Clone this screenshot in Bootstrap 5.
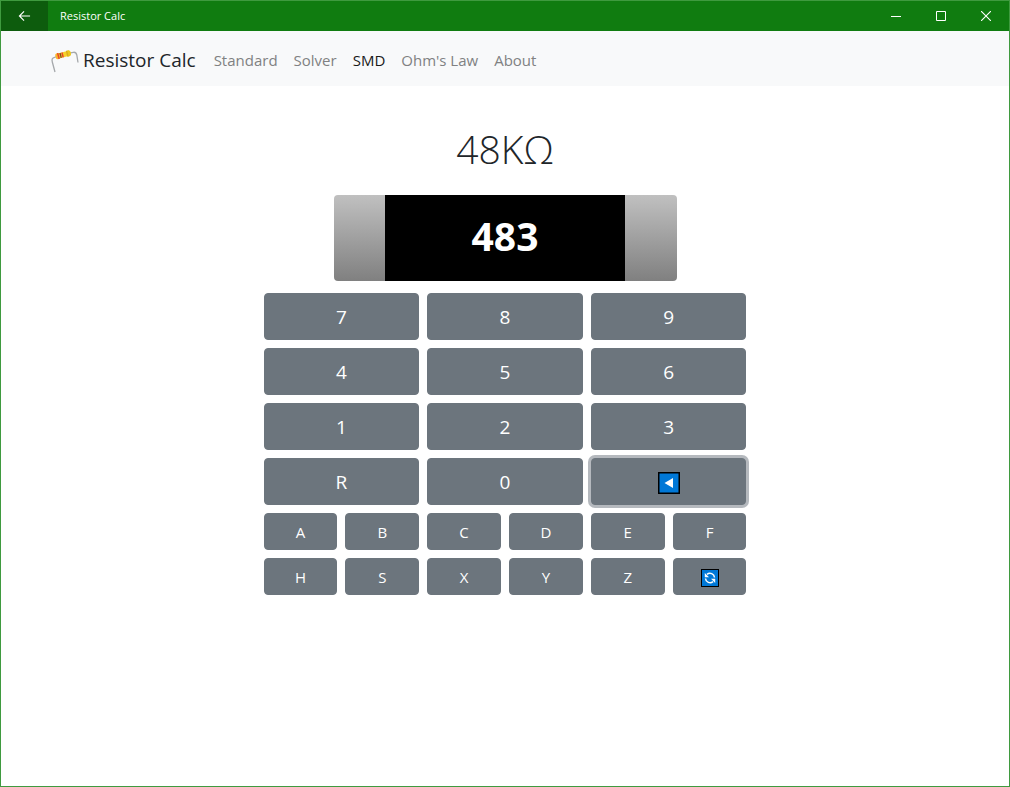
<!DOCTYPE html>
<html lang="en">
<head>
<meta charset="utf-8">
<meta name="viewport" content="width=device-width, initial-scale=1">
<title>Resistor Calc</title>
<link href="https://cdn.jsdelivr.net/npm/bootstrap@5.3.0/dist/css/bootstrap.min.css" rel="stylesheet">
<style>
  body { font-family: "Open Sans", "Noto Sans", sans-serif; color: #212529; }
  .app-window { border: 1px solid #3f9a3f; }
  .title-bar { background: #107c10; height: 30px; font-size: 11px; font-weight: 500; padding-right: 1px; }
  .title-bar button { border: 0; background: transparent; color: #fff; padding: 0; width: 45px; }
  .title-bar .back-btn { background: #0d5c0d; width: 47px; }
  .title-bar svg, .key svg { display: block; margin: 0 auto; }
  .app-nav { background: #f8f9fa; padding: 10px 0 6px; font-size: 15px; }
  .nav-inner { padding: 0 49px; }
  .app-nav .navbar-brand { font-size: 19px; line-height: 29px; padding: 5px 0; margin-right: 10px; gap: 3px; color: #212529; }
  .app-nav .nav-link { color: #808182; padding: 8px; line-height: 23px; }
  .app-nav .nav-link.active { color: #1a1a1a; }
  .reading { font-size: 39px; font-weight: 350; line-height: 48px; margin: 39px 0 22px; }
  .smd { max-width: 343px; height: 86px; border-radius: 4px; overflow: hidden; }
  .smd-end { width: 15%; background: linear-gradient(#c0c0c0, #808080); }
  .smd-code { background: #000; color: #fff; font-size: 39px; font-weight: 700; padding-bottom: 3px; }
  .keypad { max-width: 483px; margin-top: 12px; }
  .key { background: #6c757d; border-color: #6c757d; color: #fff; border-radius: 4px; font-size: 15px; line-height: 23px; padding: 7px 6px 5px; }
  .key-lg { font-size: 19px; line-height: 29px; padding: 9px 8px 7px; }
  .key:hover, .key:focus { background: #6c757d; border-color: #6c757d; color: #fff; }
  .key-focus { box-shadow: 0 0 0 3px #b5b9be; }
</style>
</head>
<body>
<div class="app-window min-vh-100">
  <header class="title-bar d-flex align-items-stretch text-white">
    <button class="back-btn" type="button" aria-label="Back">
      <svg width="13" height="12" viewBox="0 0 14 12" fill="none" stroke="#fff" stroke-width="1.2"><path d="M13 6H1.5M6.5 1l-5 5 5 5"/></svg>
    </button>
    <span class="align-self-center ps-2 ms-1 me-auto">Resistor Calc</span>
    <button type="button" aria-label="Minimize"><svg width="10" height="10" stroke="#fff"><path d="M0 5.5h10"/></svg></button>
    <button type="button" aria-label="Maximize"><svg width="10" height="10" fill="none" stroke="#fff"><path d="M.5.5h9v9h-9z"/></svg></button>
    <button type="button" aria-label="Close"><svg width="10" height="10" fill="none" stroke="#fff" stroke-width="1.1"><path d="M0 0l10 10M10 0L0 10"/></svg></button>
  </header>

  <nav class="navbar navbar-expand app-nav">
    <div class="container-fluid nav-inner">
      <a class="navbar-brand d-flex align-items-center" href="#">
        <svg width="30" height="24" viewBox="0 0 30 24" fill="none">
          <path d="M5 23L2.300 13Q1.200 9 4.500 8.300L7 7.500M19 4.200L23.500 3.300Q26 3 26.800 6L28 13.500" stroke="#a5a8ab" stroke-width="1.300"/>
          <g transform="rotate(-15 13 6)">
            <rect x="5.500" y="3.300" width="15.500" height="5" rx="2" fill="#f6cf2b"/>
            <rect x="5.500" y="2.700" width="4.500" height="6.200" rx="2" fill="#f9b52c"/>
            <rect x="16.500" y="2.700" width="4.500" height="6.200" rx="2" fill="#ecc81e"/>
            <path d="M8.300 2.800v6M12.600 3.300v5" stroke="#e8452a" stroke-width="1.500"/>
            <path d="M10.600 3.300v5" stroke="#7b4e20" stroke-width="1.300"/>
            <path d="M17.500 2.800v6" stroke="#d9ac1d" stroke-width="1.200"/>
          </g>
        </svg>
        <span>Resistor Calc</span>
      </a>
      <ul class="navbar-nav me-auto">
        <li class="nav-item"><a class="nav-link" href="#">Standard</a></li>
        <li class="nav-item"><a class="nav-link" href="#">Solver</a></li>
        <li class="nav-item"><a class="nav-link active" aria-current="page" href="#">SMD</a></li>
        <li class="nav-item"><a class="nav-link" href="#">Ohm's Law</a></li>
        <li class="nav-item"><a class="nav-link" href="#">About</a></li>
      </ul>
    </div>
  </nav>

  <main class="container">
    <h1 class="reading text-center">48KΩ</h1>
    <div class="smd d-flex mx-auto">
      <div class="smd-end"></div>
      <div class="smd-code flex-fill d-flex align-items-center justify-content-center">483</div>
      <div class="smd-end"></div>
    </div>
    <div class="keypad mx-auto">
      <div class="row g-2">
        <div class="col-4"><button type="button" class="btn key key-lg w-100">7</button></div>
        <div class="col-4"><button type="button" class="btn key key-lg w-100">8</button></div>
        <div class="col-4"><button type="button" class="btn key key-lg w-100">9</button></div>
        <div class="col-4"><button type="button" class="btn key key-lg w-100">4</button></div>
        <div class="col-4"><button type="button" class="btn key key-lg w-100">5</button></div>
        <div class="col-4"><button type="button" class="btn key key-lg w-100">6</button></div>
        <div class="col-4"><button type="button" class="btn key key-lg w-100">1</button></div>
        <div class="col-4"><button type="button" class="btn key key-lg w-100">2</button></div>
        <div class="col-4"><button type="button" class="btn key key-lg w-100">3</button></div>
        <div class="col-4"><button type="button" class="btn key key-lg w-100">R</button></div>
        <div class="col-4"><button type="button" class="btn key key-lg w-100">0</button></div>
        <div class="col-4 d-flex"><button type="button" class="btn key key-lg key-focus w-100" aria-label="Backspace">
          <svg width="22" height="22" viewBox="0 0 22 22"><rect width="22" height="22" fill="#000"/><rect x="1.500" y="1.500" width="19" height="19" fill="#0078d7"/><path d="M15 6v10L6.500 11z" fill="#fff"/></svg>
        </button></div>
        <div class="col-2"><button type="button" class="btn key w-100">A</button></div>
        <div class="col-2"><button type="button" class="btn key w-100">B</button></div>
        <div class="col-2"><button type="button" class="btn key w-100">C</button></div>
        <div class="col-2"><button type="button" class="btn key w-100">D</button></div>
        <div class="col-2"><button type="button" class="btn key w-100">E</button></div>
        <div class="col-2"><button type="button" class="btn key w-100">F</button></div>
        <div class="col-2"><button type="button" class="btn key w-100">H</button></div>
        <div class="col-2"><button type="button" class="btn key w-100">S</button></div>
        <div class="col-2"><button type="button" class="btn key w-100">X</button></div>
        <div class="col-2"><button type="button" class="btn key w-100">Y</button></div>
        <div class="col-2"><button type="button" class="btn key w-100">Z</button></div>
        <div class="col-2 d-flex"><button type="button" class="btn key w-100" aria-label="Reset">
          <svg width="18" height="18" viewBox="0 0 18 18" fill="none"><rect width="18" height="18" fill="#000"/><rect x="1" y="1" width="16" height="16" fill="#0078d7"/><path d="M6 5.300A4.600 4.600 0 0 1 13.500 8.500M12 12.700A4.600 4.600 0 0 1 4.500 9.500" stroke="#fff" stroke-width="1.500"/><path d="M3.800 4v4.200H8zM14.200 14V9.800H10z" fill="#fff"/></svg>
        </button></div>
      </div>
    </div>
  </main>
</div>
<script src="https://cdn.jsdelivr.net/npm/bootstrap@5.3.0/dist/js/bootstrap.bundle.min.js"></script>
</body>
</html>
